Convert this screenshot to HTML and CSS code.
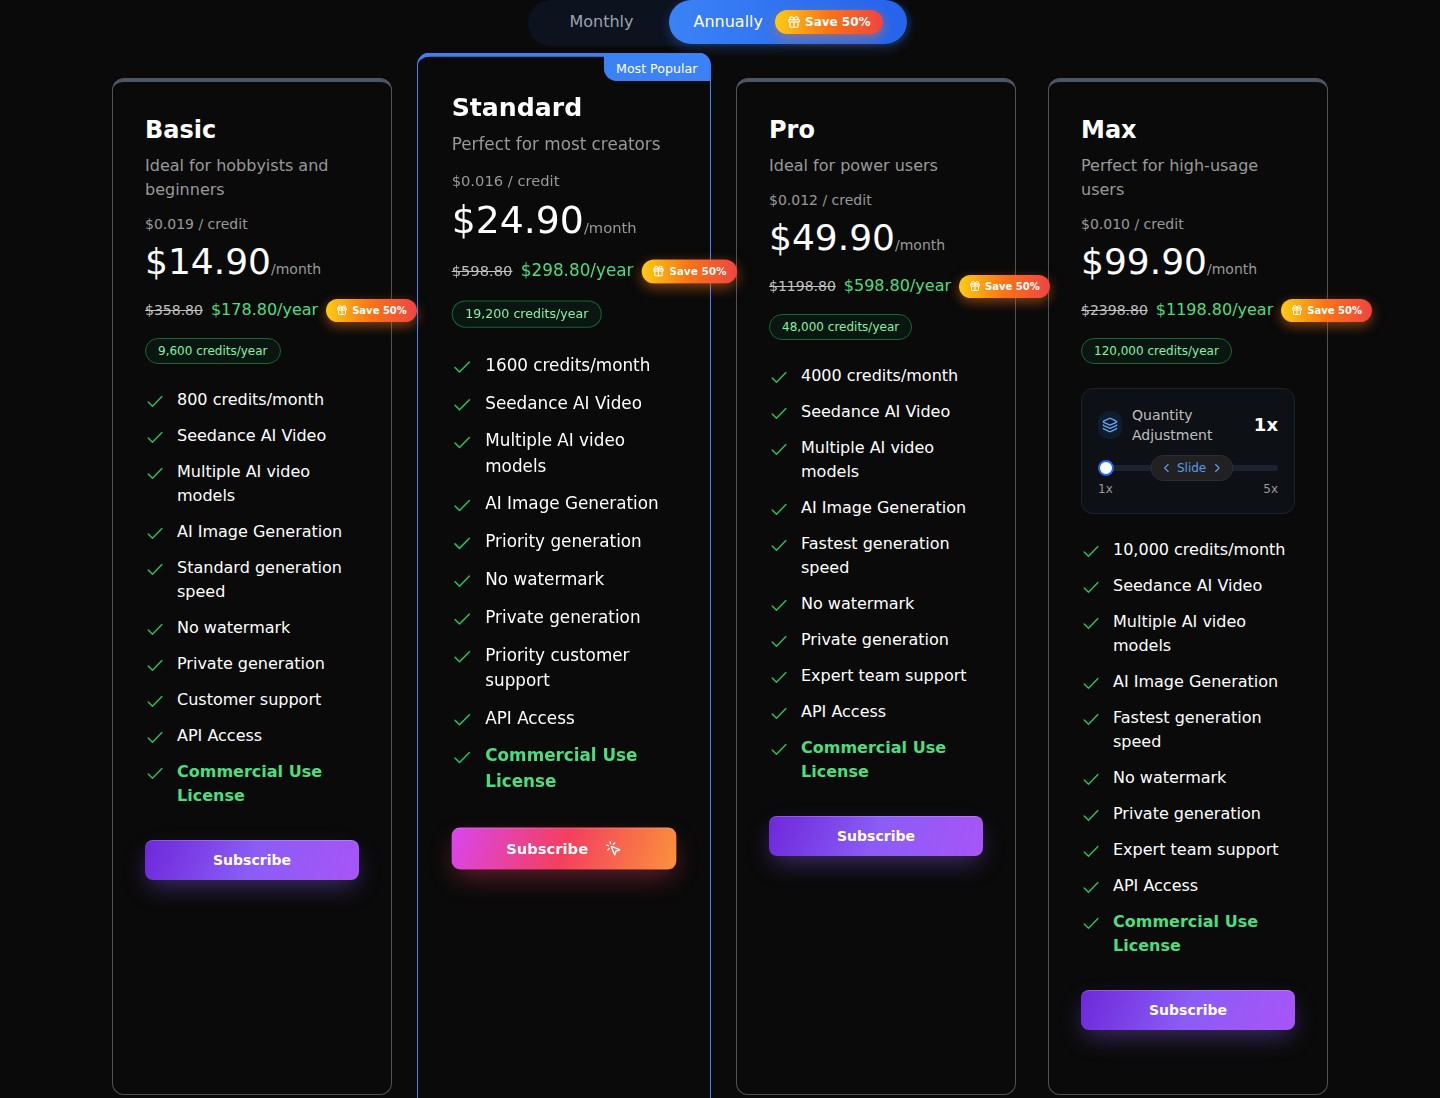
FILE: index.html
```html
<!DOCTYPE html>
<html lang="en">
<head>
    <meta charset="UTF-8">
    <meta name="viewport" content="width=device-width, initial-scale=1.0">
    <title>Pricing</title>
    <link rel="stylesheet" href="styles.css">
</head>
<body>

    <svg class="sprite" aria-hidden="true">
        <symbol id="gift" viewBox="0 0 24 24">
            <rect x="3" y="8" width="18" height="4" rx="1"/>
            <path d="M12 8v13"/>
            <path d="M19 12v7a2 2 0 0 1-2 2H7a2 2 0 0 1-2-2v-7"/>
            <path d="M7.5 8a2.5 2.5 0 0 1 0-5A4.8 8 0 0 1 12 8a4.8 8 0 0 1 4.5-5 2.5 2.5 0 0 1 0 5"/>
        </symbol>
        <symbol id="check" viewBox="0 0 20 20">
            <path d="M3.2 9.9l4.3 4.3 9.4-9.6"/>
        </symbol>
        <symbol id="layers" viewBox="0 0 24 24">
            <path d="M12.83 2.18a2 2 0 0 0-1.66 0L2.6 6.08a1 1 0 0 0 0 1.83l8.58 3.91a2 2 0 0 0 1.66 0l8.58-3.9a1 1 0 0 0 0-1.83z"/>
            <path d="M2 12a1 1 0 0 0 .58.91l8.6 3.91a2 2 0 0 0 1.65 0l8.58-3.9A1 1 0 0 0 22 12"/>
            <path d="M2 17a1 1 0 0 0 .58.91l8.6 3.91a2 2 0 0 0 1.65 0l8.58-3.9A1 1 0 0 0 22 17"/>
        </symbol>
        <symbol id="click" viewBox="0 0 24 24">
            <path d="M14 4.1L12 6"/>
            <path d="M5.1 8l-2.9-.8"/>
            <path d="M6 12l-1.9 2"/>
            <path d="M7.2 2.2L8 5.1"/>
            <path d="M9.037 9.69a.498.498 0 0 1 .653-.653l11 4.5a.5.5 0 0 1-.074.949l-4.349 1.041a1 1 0 0 0-.74.739l-1.04 4.35a.5.5 0 0 1-.95.074z"/>
        </symbol>
        <symbol id="left" viewBox="0 0 24 24"><path d="M15 18l-6-6 6-6"/></symbol>
        <symbol id="right" viewBox="0 0 24 24"><path d="M9 18l6-6-6-6"/></symbol>
    </svg>

    <div class="billing">
        <button type="button" class="billing-option">Monthly</button>
        <button type="button" class="billing-option active">Annually
            <span class="save save-large"><svg><use href="#gift"/></svg>Save 50%</span>
        </button>
    </div>

    <main class="plans">
        <section class="plan">
            <h2>Basic</h2>
            <p class="description">Ideal for hobbyists and beginners</p>
            <p class="rate">$0.019 / credit</p>
            <p class="price">$14.90<span>/month</span></p>
            <div class="yearly">
                <del>$358.80</del>
                <span class="total">$178.80/year</span>
                <span class="save"><svg><use href="#gift"/></svg>Save 50%</span>
            </div>
            <span class="credits">9,600 credits/year</span>
            <ul class="features">
                <li><svg><use href="#check"/></svg>800 credits/month</li>
                <li><svg><use href="#check"/></svg>Seedance AI Video</li>
                <li><svg><use href="#check"/></svg>Multiple AI video models</li>
                <li><svg><use href="#check"/></svg>AI Image Generation</li>
                <li><svg><use href="#check"/></svg>Standard generation speed</li>
                <li><svg><use href="#check"/></svg>No watermark</li>
                <li><svg><use href="#check"/></svg>Private generation</li>
                <li><svg><use href="#check"/></svg>Customer support</li>
                <li><svg><use href="#check"/></svg>API Access</li>
                <li class="license"><svg><use href="#check"/></svg>Commercial Use License</li>
            </ul>
            <button type="button" class="subscribe">Subscribe</button>
        </section>

        <section class="plan popular">
            <span class="ribbon">Most Popular</span>
            <h2>Standard</h2>
            <p class="description">Perfect for most creators</p>
            <p class="rate">$0.016 / credit</p>
            <p class="price">$24.90<span>/month</span></p>
            <div class="yearly">
                <del>$598.80</del>
                <span class="total">$298.80/year</span>
                <span class="save"><svg><use href="#gift"/></svg>Save 50%</span>
            </div>
            <span class="credits">19,200 credits/year</span>
            <ul class="features">
                <li><svg><use href="#check"/></svg>1600 credits/month</li>
                <li><svg><use href="#check"/></svg>Seedance AI Video</li>
                <li><svg><use href="#check"/></svg>Multiple AI video models</li>
                <li><svg><use href="#check"/></svg>AI Image Generation</li>
                <li><svg><use href="#check"/></svg>Priority generation</li>
                <li><svg><use href="#check"/></svg>No watermark</li>
                <li><svg><use href="#check"/></svg>Private generation</li>
                <li><svg><use href="#check"/></svg>Priority customer support</li>
                <li><svg><use href="#check"/></svg>API Access</li>
                <li class="license"><svg><use href="#check"/></svg>Commercial Use License</li>
            </ul>
            <button type="button" class="subscribe">Subscribe <svg><use href="#click"/></svg></button>
        </section>

        <section class="plan">
            <h2>Pro</h2>
            <p class="description">Ideal for power users</p>
            <p class="rate">$0.012 / credit</p>
            <p class="price">$49.90<span>/month</span></p>
            <div class="yearly">
                <del>$1198.80</del>
                <span class="total">$598.80/year</span>
                <span class="save"><svg><use href="#gift"/></svg>Save 50%</span>
            </div>
            <span class="credits">48,000 credits/year</span>
            <ul class="features">
                <li><svg><use href="#check"/></svg>4000 credits/month</li>
                <li><svg><use href="#check"/></svg>Seedance AI Video</li>
                <li><svg><use href="#check"/></svg>Multiple AI video models</li>
                <li><svg><use href="#check"/></svg>AI Image Generation</li>
                <li><svg><use href="#check"/></svg>Fastest generation speed</li>
                <li><svg><use href="#check"/></svg>No watermark</li>
                <li><svg><use href="#check"/></svg>Private generation</li>
                <li><svg><use href="#check"/></svg>Expert team support</li>
                <li><svg><use href="#check"/></svg>API Access</li>
                <li class="license"><svg><use href="#check"/></svg>Commercial Use License</li>
            </ul>
            <button type="button" class="subscribe">Subscribe</button>
        </section>

        <section class="plan">
            <h2>Max</h2>
            <p class="description">Perfect for high-usage users</p>
            <p class="rate">$0.010 / credit</p>
            <p class="price">$99.90<span>/month</span></p>
            <div class="yearly">
                <del>$2398.80</del>
                <span class="total">$1198.80/year</span>
                <span class="save"><svg><use href="#gift"/></svg>Save 50%</span>
            </div>
            <span class="credits">120,000 credits/year</span>
            <div class="quantity">
                <div class="quantity-head">
                    <span class="quantity-icon"><svg><use href="#layers"/></svg></span>
                    <label for="quantity">Quantity Adjustment</label>
                    <output for="quantity">1x</output>
                </div>
                <div class="slider">
                    <input type="range" id="quantity" min="1" max="5" value="1">
                    <span class="hint"><svg><use href="#left"/></svg>Slide<svg><use href="#right"/></svg></span>
                </div>
                <div class="range-labels"><span>1x</span><span>5x</span></div>
            </div>
            <ul class="features">
                <li><svg><use href="#check"/></svg>10,000 credits/month</li>
                <li><svg><use href="#check"/></svg>Seedance AI Video</li>
                <li><svg><use href="#check"/></svg>Multiple AI video models</li>
                <li><svg><use href="#check"/></svg>AI Image Generation</li>
                <li><svg><use href="#check"/></svg>Fastest generation speed</li>
                <li><svg><use href="#check"/></svg>No watermark</li>
                <li><svg><use href="#check"/></svg>Private generation</li>
                <li><svg><use href="#check"/></svg>Expert team support</li>
                <li><svg><use href="#check"/></svg>API Access</li>
                <li class="license"><svg><use href="#check"/></svg>Commercial Use License</li>
            </ul>
            <button type="button" class="subscribe">Subscribe</button>
        </section>
    </main>

</body>
</html>
```
FILE: styles.css
```css
* {
    box-sizing: border-box;
}

body {
    margin: 0;
    background-color: #0a0a0a;
    color: #fff;
    font-family: "DejaVu Sans", sans-serif;
    font-size: 16px;
    line-height: 24px;
    overflow-x: hidden;
}

h2, p, ul {
    margin: 0;
    padding: 0;
}

button {
    border: none;
    color: inherit;
    font: inherit;
    cursor: pointer;
}

svg {
    flex: none;
    fill: none;
    stroke: currentColor;
    stroke-width: 2;
    stroke-linecap: round;
    stroke-linejoin: round;
}

.sprite {
    display: none;
}

/* billing toggle */
.billing {
    display: flex;
    width: fit-content;
    margin: 0 auto;
    padding: 0 5px 2px;
    border-radius: 24px;
    background-color: #0d121f;
}

.billing-option {
    display: flex;
    align-items: center;
    gap: 12px;
    height: 44px;
    padding: 0 36px;
    border-radius: 22px;
    background: none;
    color: #9ca3af;
}

.billing-option.active {
    padding: 0 24px;
    background: linear-gradient(to right, #3b82f6, #2563eb);
    box-shadow: 0 4px 12px rgba(59, 130, 246, 0.3);
    color: #fff;
}

.save {
    position: relative;
    z-index: 1;
    display: flex;
    align-items: center;
    gap: 4px;
    padding: 4px 10px;
    border-radius: 12px;
    background: linear-gradient(to right, #facc15, #f97316, #ef4444);
    box-shadow: 0 4px 12px rgba(249, 115, 22, 0.5);
    color: #fff;
    font-size: 10px;
    font-weight: bold;
    line-height: 15px;
    white-space: nowrap;
}

.save svg {
    width: 12px;
    height: 12px;
}

.save-large {
    padding: 4px 12px;
    font-size: 12px;
    line-height: 16px;
}

.save-large svg {
    width: 14px;
    height: 14px;
}

/* plans */
.plans {
    display: grid;
    grid-template-columns: repeat(4, 1fr);
    gap: 32px;
    max-width: 1216px;
    margin: 32px auto;
}

.plan {
    position: relative;
    min-width: 0;
    padding: 32px 32px 64px;
    border: 1px solid #525252;
    border-top: 4px solid #4b5563;
    border-radius: 12px;
}

.popular {
    z-index: 1;
    border-color: #3b82f6;
    transform: scale(1.05);
}

.ribbon {
    position: absolute;
    top: -1px;
    right: 0;
    padding: 4px 12px;
    border-radius: 0 8px 0 12px;
    background-color: #3b82f6;
    font-size: 12px;
    line-height: 16px;
}

.plan h2 {
    font-size: 24px;
    line-height: 32px;
}

.description {
    margin-top: 8px;
    color: #999;
}

.rate {
    margin-top: 12px;
    color: #999;
    font-size: 14px;
    line-height: 20px;
}

.price {
    margin-top: 8px;
    font-size: 36px;
    line-height: 40px;
}

.price span {
    color: #999;
    font-size: 14px;
    line-height: 20px;
}

.yearly {
    display: flex;
    align-items: center;
    gap: 8px;
    height: 24px;
    margin-top: 16px;
    white-space: nowrap;
}

.yearly del {
    color: #c0c0c0;
    font-size: 14px;
}

.total {
    color: #4ade80;
}

.credits {
    display: block;
    width: fit-content;
    margin-top: 16px;
    padding: 4px 12px;
    border: 1px solid #166534;
    border-radius: 13px;
    background-color: #0a1710;
    color: #86efac;
    font-size: 12px;
    line-height: 16px;
}

.features {
    display: flex;
    flex-direction: column;
    gap: 12px;
    margin-top: 24px;
    list-style: none;
}

.features li {
    display: flex;
    gap: 12px;
}

.features svg {
    width: 20px;
    height: 20px;
    margin-top: 4px;
    color: #22c55e;
    stroke-width: 1.4;
}

.features .license {
    color: #4ade80;
    font-weight: bold;
}

.subscribe {
    display: flex;
    align-items: center;
    justify-content: center;
    gap: 16px;
    width: 100%;
    height: 40px;
    margin-top: 32px;
    border-radius: 8px;
    background: linear-gradient(110deg, #6d28d9, #8b5cf6, #a855f7);
    box-shadow: 0 10px 24px -4px rgba(139, 92, 246, 0.4), inset 0 1px 0 rgba(255, 255, 255, 0.2);
    font-size: 14px;
    font-weight: bold;
}

.subscribe svg {
    width: 16px;
    height: 16px;
}

.popular .subscribe {
    background: linear-gradient(110deg, #d946ef, #f43f5e, #fb923c);
    box-shadow: 0 10px 24px -4px rgba(244, 63, 94, 0.4), inset 0 1px 0 rgba(255, 255, 255, 0.2);
}

/* quantity slider */
.quantity {
    margin-top: 24px;
    padding: 16px;
    border: 1px solid #172533;
    border-radius: 12px;
    background-color: #0d1014;
}

.quantity-head {
    display: flex;
    align-items: center;
    gap: 10px;
    margin-bottom: 12px;
    color: #bfbfbf;
    font-size: 14px;
    line-height: 20px;
}

.quantity-icon {
    display: flex;
    padding: 6px 4px;
    border-radius: 10px;
    background-color: #0f1c2b;
    color: #60a5fa;
}

.quantity-icon svg {
    width: 16px;
    height: 16px;
}

.quantity-head label {
    flex: 1;
}

.quantity-head output {
    color: #fff;
    font-size: 18px;
    font-weight: bold;
}

.slider {
    position: relative;
    display: flex;
    align-items: center;
    height: 22px;
}

.slider input {
    width: 100%;
    height: 6px;
    margin: 0;
    border-radius: 3px;
    background-color: #1b2333;
    appearance: none;
}

.slider input::-webkit-slider-thumb {
    width: 16px;
    height: 16px;
    border: 2px solid #2563eb;
    border-radius: 50%;
    background-color: #fff;
    appearance: none;
}

/* sits over the middle of the track */
.hint {
    position: absolute;
    top: 50%;
    left: 52%;
    display: flex;
    align-items: center;
    gap: 4px;
    padding: 4px 8px;
    border: 1px solid #2c2c38;
    border-radius: 13px;
    background-color: #212121;
    color: #5b9bea;
    font-size: 12px;
    line-height: 16px;
    transform: translate(-50%, -50%);
    pointer-events: none;
}

.hint svg {
    width: 14px;
    height: 14px;
}

.range-labels {
    display: flex;
    justify-content: space-between;
    margin-top: 2px;
    color: #999;
    font-size: 12px;
    line-height: 16px;
}
```
